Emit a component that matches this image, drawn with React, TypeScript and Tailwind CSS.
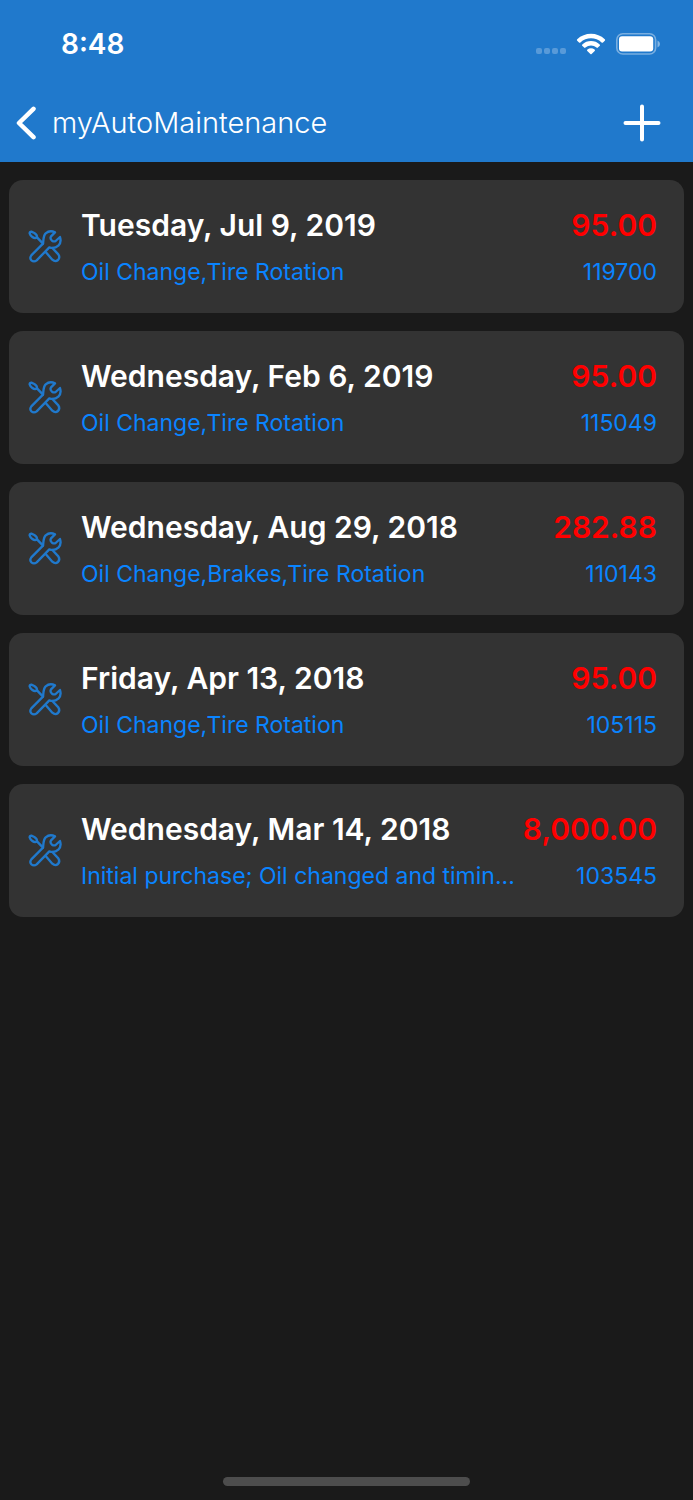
type ServiceRecord = {
  date: string;
  cost: string;
  services: string;
  mileage: string;
};

const records: ServiceRecord[] = [
  { date: "Tuesday, Jul 9, 2019", cost: "95.00", services: "Oil Change,Tire Rotation", mileage: "119700" },
  { date: "Wednesday, Feb 6, 2019", cost: "95.00", services: "Oil Change,Tire Rotation", mileage: "115049" },
  { date: "Wednesday, Aug 29, 2018", cost: "282.88", services: "Oil Change,Brakes,Tire Rotation", mileage: "110143" },
  { date: "Friday, Apr 13, 2018", cost: "95.00", services: "Oil Change,Tire Rotation", mileage: "105115" },
  { date: "Wednesday, Mar 14, 2018", cost: "8,000.00", services: "Initial purchase; Oil changed and timin...", mileage: "103545" },
];

function ToolsIcon() {
  return (
    <svg viewBox="39 45 102 102" className="size-[34px] shrink-0" fill="none" stroke="#2079cc" strokeWidth="7" strokeLinecap="round" strokeLinejoin="round" aria-hidden="true">
      <path d="M44 55 Q44 50 49 50 L58 54 Q67 60 66 67 Q60 72 52 66 Q46 62 44 55 Z" />
      <path d="M66 67 L84 86" />
      <path d="M84 86 L49 121 Q43 129 49 136 Q57 142 65 136 L103 97 C112 100 122 99 130 92 C138 84 138 75 135 66 L122 78 Q117 81 111 77 Q104 71 108 64 L120 52 C110 47 99 49 92 55 C84 63 86 75 84 86 Z" />
      <path d="M92 111 L112 134 Q121 142 129 135 Q136 127 130 118 L112 99" />
    </svg>
  );
}

function StatusBar() {
  return (
    <div className="flex h-[88px] items-center justify-between pr-[33px] pl-[61px]">
      <time className="text-[28px] leading-9 font-semibold">8:48</time>
      <div className="flex items-center gap-[10px]">
        <div className="flex gap-[2px] pt-[14px]">
          {[0, 1, 2, 3].map((dot) => (
            <span key={dot} className="size-[6px] rounded-[2px] bg-white/25" />
          ))}
        </div>
        <svg viewBox="0 0 30 22" className="h-[22px] w-[30px]" fill="#fff" aria-label="Wi-Fi">
          <path d="M1.2 7.7 Q.5 7 1.2 6.2 C8.6-1.2 21.400-1.2 28.800 6.200 Q29.500 7 28.800 7.700 L27 9.500 Q26.300 10.100 25.600 9.500 C19.700 3.900 10.300 3.900 4.400 9.500 Q3.700 10.100 3 9.500 Z" />
          <path d="M6.200 12.800 Q5.600 12.100 6.300 11.400 C11 6.900 19 6.900 23.700 11.400 Q24.400 12.100 23.800 12.800 L21.900 14.600 Q21.200 15.200 20.500 14.600 C17.400 11.900 12.600 11.900 9.500 14.600 Q8.800 15.200 8.100 14.600 Z" />
          <path d="M11.300 17.900 Q10.600 17.200 11.400 16.600 C13.500 14.900 16.500 14.900 18.600 16.600 Q19.400 17.200 18.700 17.900 L15.600 21 Q15 21.600 14.400 21 Z" />
        </svg>
        <svg viewBox="0 0 44 22" className="h-[22px] w-[44px]" aria-label="Battery">
          <rect x="0.800" y="0.800" width="38.800" height="20.200" rx="6" fill="none" stroke="#fff" strokeOpacity=".4" strokeWidth="1.600" />
          <rect x="3" y="3.200" width="34.200" height="15.400" rx="3" fill="#fff" />
          <path d="M41.500 7.500 Q44 8.500 44 11 Q44 13.500 41.500 14.500 Z" fill="#fff" fillOpacity=".45" />
        </svg>
      </div>
    </div>
  );
}

function NavBar() {
  return (
    <div className="flex h-[74px] items-center justify-between pr-8 pb-[5px] pl-4">
      <button type="button" className="flex items-center gap-4">
        <svg viewBox="0 0 20 34" className="h-[34px] w-5" fill="none" stroke="#fff" strokeWidth="4.500" strokeLinecap="round" strokeLinejoin="round" aria-hidden="true">
          <path d="M17.500 2.800 L3 17 L17.500 31.200" />
        </svg>
        <span className="text-[29px] leading-9 font-light">myAutoMaintenance</span>
      </button>
      <button type="button" aria-label="Add record">
        <svg viewBox="0 0 38 38" className="size-[38px]" fill="none" stroke="#fff" strokeWidth="4" strokeLinecap="round" aria-hidden="true">
          <path d="M19 2.500 V35.500 M2.500 19 H35.500" />
        </svg>
      </button>
    </div>
  );
}

function RecordCard({ record }: { record: ServiceRecord }) {
  return (
    <li className="flex items-center gap-[19px] rounded-[14px] bg-[#333333] py-[27px] pr-[27px] pl-[19px]">
      <ToolsIcon />
      <div className="flex min-w-0 flex-1 flex-col gap-4">
        <div className="flex justify-between gap-4 text-[30px] leading-9 font-semibold">
          <h2 className="truncate">{record.date}</h2>
          <span className="text-[#ff0000]">{record.cost}</span>
        </div>
        <div className="flex justify-between gap-4 text-[23px] leading-[27px] text-[#0a84ff]">
          <p className="truncate">{record.services}</p>
          <span>{record.mileage}</span>
        </div>
      </div>
    </li>
  );
}

export default function App() {
  return (
    <div className="flex min-h-screen flex-col bg-[#1a1a1a] font-['Inter',sans-serif] text-white">
      <header className="bg-[#2079cc]">
        <StatusBar />
        <NavBar />
      </header>
      <main className="flex-1">
        <ul className="flex flex-col gap-[18px] px-[9px] pt-[18px]">
          {records.map((record) => (
            <RecordCard key={record.date} record={record} />
          ))}
        </ul>
      </main>
      <footer className="flex justify-center pb-[14px]">
        <div className="h-[9px] w-[247px] rounded-full bg-[#4d4d4d]" />
      </footer>
    </div>
  );
}
